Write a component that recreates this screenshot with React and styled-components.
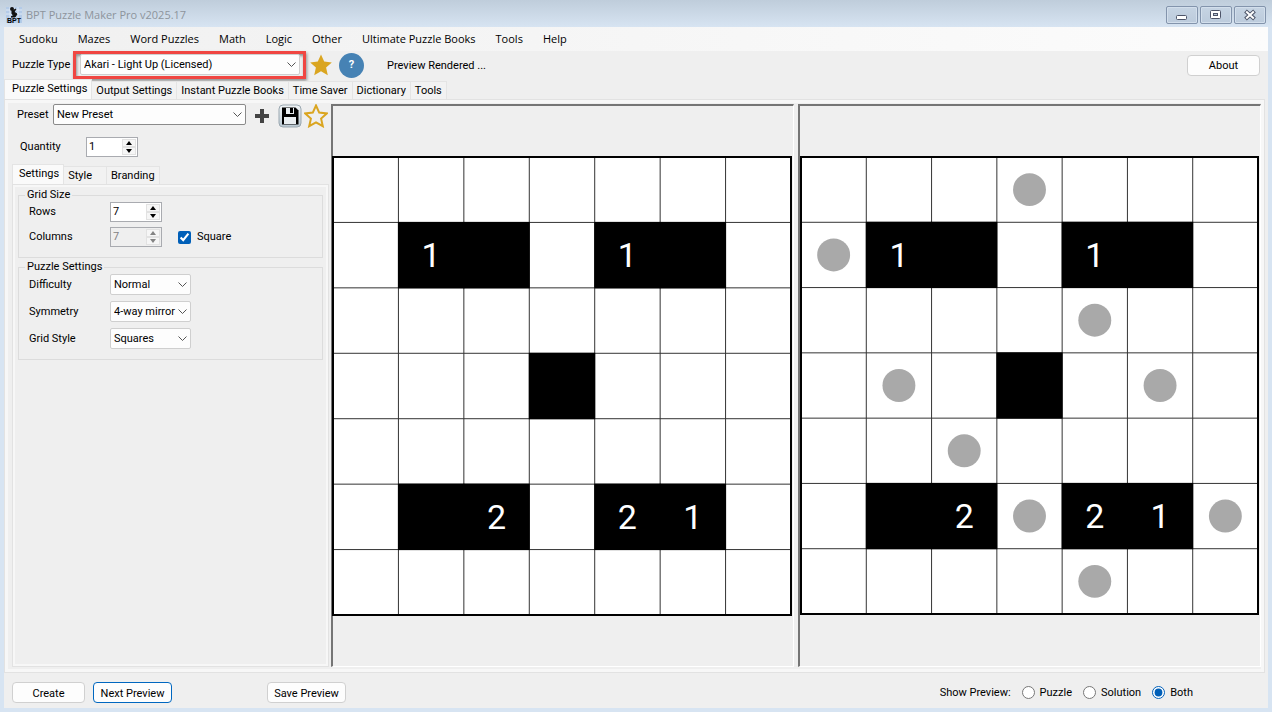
import React, { useState } from "react";
import styled, { createGlobalStyle } from "styled-components";

const menus = ["Sudoku", "Mazes", "Word Puzzles", "Math", "Logic", "Other", "Ultimate Puzzle Books", "Tools", "Help"];

const mainTabs = ["Puzzle Settings", "Output Settings", "Instant Puzzle Books", "Time Saver", "Dictionary", "Tools"];

const blackCells = [[1, 1], [1, 2], [1, 4], [1, 5], [3, 3], [5, 1], [5, 2], [5, 4], [5, 5]];

const clues = [[1, 1, "1"], [1, 4, "1"], [5, 2, "2"], [5, 4, "2"], [5, 5, "1"]];

const bulbs = [[0, 3], [1, 0], [2, 4], [3, 1], [3, 5], [4, 2], [5, 3], [5, 6], [6, 4]];

const STAR = "M12 1.5 L15.2 8.6 L22.8 9.4 L17.1 14.6 L18.8 22.2 L12 18.3 L5.2 22.2 L6.9 14.6 L1.2 9.4 L8.8 8.6 Z";

const AppIcon = () => (
  <svg width="16" height="16" viewBox="0 0 16 16" aria-hidden="true">
    <rect width="16" height="16" fill="#b4cbe8" />
    <path d="M4 0V11M8 0V11M12 0V11M0 3H16M0 7H16" stroke="#dfe9f5" strokeWidth="1" />
    <circle cx="6" cy="2" r="2" fill="#111" />
    <path d="M6 4L10 2L8 5L11 7L9 10H5L8 8L6 7Z" fill="#111" stroke="#111" />
    <text x="8" y="16" textAnchor="middle" fontSize="7" fontWeight="bold" fontFamily="Liberation Sans, sans-serif">BPT</text>
  </svg>
);

const SaveIcon = () => (
  <svg width="24" height="24" viewBox="0 0 24 24" aria-hidden="true">
    <defs>
      <linearGradient id="plate" x1="0" y1="0" x2="0" y2="1">
        <stop offset="0" stopColor="#f2f5f7" />
        <stop offset="1" stopColor="#b9c8d2" />
      </linearGradient>
    </defs>
    <rect x="1" y="1" width="22" height="22" rx="4" fill="url(#plate)" stroke="#9aa7b0" />
    <path d="M4 3.5H17.5L20.5 6.5V20.5H4Z" fill="#000" />
    <rect x="8" y="4" width="8" height="6" fill="#e8edf0" />
    <rect x="12" y="4" width="3" height="5" fill="#000" />
    <rect x="6" y="13" width="12" height="7" fill="#e8edf0" />
  </svg>
);

const Board = ({ label, solved }) => {
  const size = 458 / 7;
  const lines = [1, 2, 3, 4, 5, 6].map((i) => i * size);
  return (
    <BoardSvg viewBox="0 0 458 458" role="img" aria-label={label}>
      <rect width="458" height="458" fill="#fff" />
      {lines.map((p) => (
        <path key={p} d={`M${p} 0V458M0 ${p}H458`} stroke="#333" strokeWidth="1" />
      ))}
      {blackCells.map(([r, c]) => (
        <rect key={`${r}-${c}`} x={c * size - 0.5} y={r * size - 0.5} width={size + 1} height={size + 1} />
      ))}
      {clues.map(([r, c, value]) => (
        <Clue key={`${r}-${c}`} x={(c + 0.5) * size} y={(r + 0.5) * size + 12}>{value}</Clue>
      ))}
      {solved && bulbs.map(([r, c]) => (
        <circle key={`${r}-${c}`} cx={(c + 0.5) * size} cy={(r + 0.5) * size} r="16.5" fill="#a9a9a9" />
      ))}
      <rect width="458" height="458" fill="none" stroke="#000" strokeWidth="2" />
    </BoardSvg>
  );
};

const NumberField = ({ id, value, disabled }) => (
  <Spinner $disabled={disabled}>
    <SpinnerInput id={id} defaultValue={value} disabled={disabled} />
    <SpinnerButtons>
      <SpinnerButton aria-label="Increase" disabled={disabled}>
        <svg width="6" height="4" viewBox="0 0 6 4"><path d="M0 4L3 0L6 4Z" fill="currentColor" /></svg>
      </SpinnerButton>
      <SpinnerButton aria-label="Decrease" disabled={disabled}>
        <svg width="6" height="4" viewBox="0 0 6 4"><path d="M0 0L3 4L6 0Z" fill="currentColor" /></svg>
      </SpinnerButton>
    </SpinnerButtons>
  </Spinner>
);

const Dropdown = ({ id, value, width, framed }) => (
  <SelectWrap $width={width}>
    <Select id={id} $framed={framed} defaultValue={value}>
      <option>{value}</option>
    </Select>
    <Chevron width="9" height="5" viewBox="0 0 9 5" aria-hidden="true">
      <path d="M0.5 0.5L4.5 4.5L8.5 0.5" fill="none" stroke="#555" />
    </Chevron>
  </SelectWrap>
);

const App = () => {
  const [preview, setPreview] = useState("Both");
  return (
    <Window>
      <GlobalStyle />
      <TitleBar>
        <AppIcon />
        <WindowTitle>BPT Puzzle Maker Pro v2025.17</WindowTitle>
        <WindowButton aria-label="Minimize">
          <svg width="12" height="12" viewBox="0 0 12 12"><rect x="0.5" y="6.5" width="10" height="4" rx="1" fill="#fff" stroke="#4d5468" /></svg>
        </WindowButton>
        <WindowButton aria-label="Maximize">
          <svg width="12" height="12" viewBox="0 0 12 12">
            <rect x="0.5" y="1.5" width="10" height="8" rx="1" fill="#fff" stroke="#4d5468" />
            <rect x="3.5" y="4.5" width="4" height="2" fill="#b8c6d6" stroke="#4d5468" />
          </svg>
        </WindowButton>
        <WindowButton aria-label="Close">
          <svg width="12" height="12" viewBox="0 0 12 12">
            <path d="M1.5 2L10.5 10M10.5 2L1.5 10" stroke="#4d5468" strokeWidth="4" />
            <path d="M2.2 2.6L9.8 9.4M9.8 2.6L2.2 9.4" stroke="#fff" strokeWidth="2" />
          </svg>
        </WindowButton>
      </TitleBar>
      <Client>
        <MenuBar>
          {menus.map((name) => <MenuItem key={name}>{name}</MenuItem>)}
        </MenuBar>
        <Toolbar>
          <TypeLabel htmlFor="type">Puzzle Type</TypeLabel>
          <Highlight>
            <Dropdown id="type" value="Akari - Light Up (Licensed)" />
          </Highlight>
          <IconButton aria-label="Favorite" $width={29}>
            <svg width="24" height="24" viewBox="0 0 24 24"><path d={STAR} fill="#daa520" /></svg>
          </IconButton>
          <HelpButton>?</HelpButton>
          <Status>Preview Rendered ...</Status>
          <Button $width={73}>About</Button>
        </Toolbar>
        <Tabs>
          {mainTabs.map((name, i) => <Tab key={name} $active={i === 0}>{name}</Tab>)}
        </Tabs>
        <Page>
          <Sidebar>
            <PresetRow>
              <label htmlFor="preset">Preset</label>
              <Dropdown id="preset" value="New Preset" width={193} framed />
              <IconButton aria-label="Add preset" $width={31}>
                <svg width="16" height="16" viewBox="0 0 16 16"><path d="M8 1V15M1 8H15" stroke="#444" strokeWidth="4" /></svg>
              </IconButton>
              <IconButton aria-label="Save preset" $width={26}><SaveIcon /></IconButton>
              <IconButton aria-label="Default preset" $width={26}>
                <svg width="24" height="24" viewBox="0 0 24 24"><path d={STAR} fill="none" stroke="#daa520" strokeWidth="2" /></svg>
              </IconButton>
            </PresetRow>
            <QuantityRow>
              <label htmlFor="quantity">Quantity</label>
              <NumberField id="quantity" value="1" />
            </QuantityRow>
            <Tabs $inner>
              <Tab $active>Settings</Tab>
              <Tab $roomy>Style</Tab>
              <Tab>Branding</Tab>
            </Tabs>
            <InnerPage>
              <Group>
                <Legend>Grid Size</Legend>
                <Fields $gap={5}>
                  <Field>
                    <label htmlFor="rows">Rows</label>
                    <NumberField id="rows" value="7" />
                  </Field>
                  <Field>
                    <label htmlFor="columns">Columns</label>
                    <NumberField id="columns" value="7" disabled />
                    <CheckLabel>
                      <CheckBox type="checkbox" defaultChecked />
                      Square
                    </CheckLabel>
                  </Field>
                </Fields>
              </Group>
              <Group>
                <Legend>Puzzle Settings</Legend>
                <Fields $gap={6}>
                  <Field>
                    <label htmlFor="difficulty">Difficulty</label>
                    <Dropdown id="difficulty" value="Normal" width={81} />
                  </Field>
                  <Field>
                    <label htmlFor="symmetry">Symmetry</label>
                    <Dropdown id="symmetry" value="4-way mirror" width={81} />
                  </Field>
                  <Field>
                    <label htmlFor="gridstyle">Grid Style</label>
                    <Dropdown id="gridstyle" value="Squares" width={81} />
                  </Field>
                </Fields>
              </Group>
            </InnerPage>
          </Sidebar>
          <Previews>
            <Preview><Board label="Puzzle" /></Preview>
            <Preview $inset><Board label="Solution" solved /></Preview>
          </Previews>
        </Page>
        <BottomBar>
          <Button $width={73}>Create</Button>
          <Button $width={79} $primary>Next Preview</Button>
          <SaveButton $width={79}>Save Preview</SaveButton>
          <RadioGroup>
            <legend>Show Preview:</legend>
            {["Puzzle", "Solution", "Both"].map((name) => (
              <RadioLabel key={name}>
                <Radio type="radio" name="preview" checked={preview === name} onChange={() => setPreview(name)} />
                {name}
              </RadioLabel>
            ))}
          </RadioGroup>
        </BottomBar>
      </Client>
    </Window>
  );
};

const GlobalStyle = createGlobalStyle`
  * {
    box-sizing: border-box;
  }

  body {
    margin: 0;
    font-family: Roboto, "Liberation Sans", sans-serif;
    font-size: 11px;
    line-height: 16px;
    color: #000;
  }

  button,
  input,
  select {
    font: inherit;
    color: inherit;
    margin: 0;
  }
`;

const Window = styled.div`
  min-height: 100vh;
  display: flex;
  flex-direction: column;
  padding: 0 4px 4px;
  background: #d7e4f2 linear-gradient(#bfcddb, #d7e4f2) top / 100% 27px no-repeat;
`;

const TitleBar = styled.header`
  height: 27px;
  display: flex;
  align-items: center;
  gap: 2px;
  padding: 3px 2px 0 2px;
`;

const WindowTitle = styled.span`
  flex: 1;
  padding-left: 2px;
  font-family: "Open Sans", sans-serif;
  font-size: 11px;
  color: #8d949c;
`;

const WindowButton = styled.button`
  width: 32px;
  height: 18px;
  display: flex;
  align-items: center;
  justify-content: center;
  padding: 0;
  border: 1px solid #8394ac;
  border-radius: 2px;
  background: linear-gradient(#c6d4e3, #bccbdc);
  box-shadow: inset 0 0 0 1px #d3dfec;
`;

const Client = styled.main`
  flex: 1;
  display: flex;
  flex-direction: column;
  background: #efefef;
`;

const MenuBar = styled.nav`
  height: 24px;
  display: flex;
  align-items: center;
  padding: 0 5px;
  background: linear-gradient(90deg, #f0f0f0, #fcfcfc);
`;

const MenuItem = styled.button`
  padding: 0 10px;
  border: 0;
  background: none;
  font-family: "Open Sans", sans-serif;
  font-size: 11px;
`;

const Toolbar = styled.div`
  height: 28px;
  display: flex;
  align-items: center;
  padding: 0 8px;
`;

const TypeLabel = styled.label`
  width: 61px;
  white-space: nowrap;
`;

const Highlight = styled.div`
  width: 233px;
  height: 28px;
  border: 3px solid #f04642;
  background: #efefef;
  box-shadow: 1px 2px 3px rgba(0, 0, 0, 0.4), inset 1px 2px 3px rgba(0, 0, 0, 0.4);
  padding: 0 3px 0 4px;
`;

const Status = styled.span`
  flex: 1;
  padding: 1px 0 0 23px;
`;

const IconButton = styled.button`
  width: ${(props) => props.$width}px;
  height: 24px;
  display: flex;
  align-items: center;
  justify-content: center;
  flex-shrink: 0;
  padding: 0;
  border: 0;
  background: none;
`;

const HelpButton = styled.button`
  width: 25px;
  height: 25px;
  margin-left: 4px;
  padding: 0;
  border: 0;
  border-radius: 50%;
  background: #4682b4;
  color: #fff;
  font-weight: bold;
`;

const Button = styled.button`
  width: ${(props) => props.$width}px;
  height: 21px;
  padding: 2px 0 0;
  border: 1px solid ${(props) => (props.$primary ? "#0067c0" : "#d0d0d0")};
  border-radius: 4px;
  background: #fdfdfd;
  white-space: nowrap;
`;

const Tabs = styled.div`
  display: flex;
  align-items: flex-end;
  height: 20px;
  margin-left: ${(props) => (props.$inner ? "3px" : "0")};

  > :first-child {
    padding-left: ${(props) => (props.$inner ? "6px" : "7px")};
  }
`;

const Tab = styled.button`
  height: ${(props) => (props.$active ? "20px" : "18px")};
  padding: ${(props) => (props.$active ? "0 4px 1px" : props.$roomy ? "1px 14px 0 4px" : "1px 4px 0")};
  border: 1px solid #e4e4e4;
  border-bottom: 0;
  border-left-width: ${(props) => (props.$active ? "1px" : "0")};
  background: ${(props) => (props.$active ? "#fafafa" : "#f2f2f2")};
  white-space: nowrap;
`;

const Page = styled.div`
  flex: 1;
  display: flex;
  margin-right: 3px;
  padding: 4px 3px 5px 4px;
  border: 1px solid #e2e2e2;
  box-shadow: inset 0 0 0 3px #f7f7f7;
`;

const Sidebar = styled.div`
  width: 322px;
  display: flex;
  flex-direction: column;
  flex-shrink: 0;
`;

const PresetRow = styled.div`
  height: 24px;
  display: flex;
  align-items: flex-start;
  padding-left: 8px;

  label {
    width: 36px;
    line-height: 21px;
  }
`;

const QuantityRow = styled.div`
  height: 36px;
  display: flex;
  align-items: center;
  padding: 2px 0 0 11px;

  label {
    width: 66px;
  }
`;

const InnerPage = styled.div`
  flex: 1;
  margin: 0 2px 0 3px;
  padding: 3px 5px;
  border: 1px solid #e2e2e2;
  box-shadow: inset 0 0 0 2px #f7f7f7;
`;

const Group = styled.fieldset`
  min-width: 0;
  margin: 0 0 2px;
  padding: 0 10px 10px;
  border: 1px solid #dcdcdc;
`;

const Legend = styled.legend`
  margin-left: -4px;
  padding: 0 2px;
  line-height: 14px;
`;

const Fields = styled.div`
  display: flex;
  flex-direction: column;
  gap: ${(props) => props.$gap}px;
`;

const Field = styled.div`
  display: flex;
  align-items: center;

  > label:first-child {
    width: 81px;
  }
`;

const Spinner = styled.div`
  width: 52px;
  height: 20px;
  display: flex;
  padding: 1px;
  border: 1px solid #a9abb0;
  background: ${(props) => (props.$disabled ? "#efefef" : "#fff")};
  color: ${(props) => (props.$disabled ? "#838383" : "#000")};
`;

const SpinnerInput = styled.input`
  flex: 1;
  min-width: 0;
  padding: 0 1px;
  border: 0;
  background: none;
`;

const SpinnerButtons = styled.div`
  width: 14px;
  display: flex;
  flex-direction: column;
`;

const SpinnerButton = styled.button`
  flex: 1;
  display: flex;
  align-items: center;
  justify-content: center;
  padding: 0;
  border: 1px solid #e2e2e2;
  background: #f6f6f6;
`;

const SelectWrap = styled.div`
  position: relative;
  width: ${(props) => (props.$width ? `${props.$width}px` : "100%")};
`;

const Select = styled.select`
  appearance: none;
  display: block;
  width: 100%;
  height: 21px;
  padding: 1px 13px 0 3px;
  border: 1px solid ${(props) => (props.$framed ? "#8a8a8a" : "#cfcfcf")};
  border-radius: 2px;
  background: #fdfdfd;
`;

const Chevron = styled.svg`
  position: absolute;
  top: 8px;
  right: 4px;
  pointer-events: none;
`;

const CheckLabel = styled.label`
  display: flex;
  align-items: center;
  gap: 6px;
  margin-left: 16px;
`;

const CheckBox = styled.input`
  width: 13px;
  height: 13px;
  accent-color: #005fb8;
`;

const Previews = styled.div`
  flex: 1;
  display: grid;
  grid-template-columns: 1fr 1fr;
  gap: 4px;
`;

const Preview = styled.section`
  display: flex;
  align-items: center;
  padding: ${(props) => (props.$inset ? "0 2px 2px 1px" : "0 2px 0 0")};
  border: 1px solid #fff;
  border-top: 2px solid #757575;
  border-left: 2px solid #757575;
`;

const BoardSvg = styled.svg`
  display: block;
  width: 100%;
  height: auto;
  overflow: visible;
`;

const Clue = styled.text`
  fill: #fff;
  font-size: 34px;
  text-anchor: middle;
`;

const BottomBar = styled.footer`
  height: 35px;
  display: flex;
  align-items: center;
  gap: 8px;
  padding: 4px 8px 0;
`;

const SaveButton = styled(Button)`
  margin-left: 87px;
`;

const RadioGroup = styled.fieldset`
  display: flex;
  align-items: center;
  gap: 11px;
  margin: 0 67px 0 auto;
  padding: 0;
  border: 0;

  legend {
    float: left;
    padding: 0;
  }
`;

const RadioLabel = styled.label`
  display: flex;
  align-items: center;
  gap: 5px;
`;

const Radio = styled.input`
  width: 13px;
  height: 13px;
  accent-color: #005fb8;
`;

export default App;
